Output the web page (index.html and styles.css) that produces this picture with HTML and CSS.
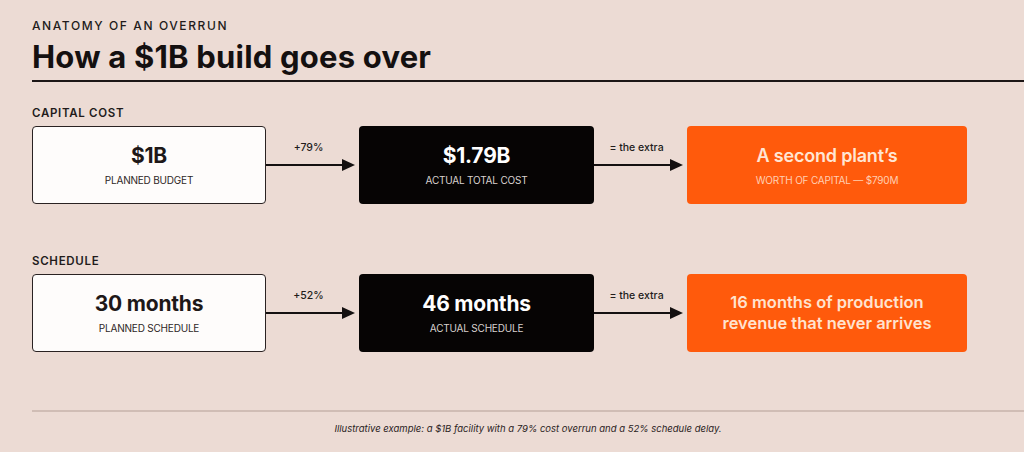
FILE: index.html
```html
<!DOCTYPE html>
<html lang="en">
<head>
<meta charset="utf-8">
<title>Anatomy of an overrun</title>
<link rel="stylesheet" href="styles.css">
</head>
<body>
<main class="page">
  <header class="head">
    <div class="eyebrow">ANATOMY OF AN OVERRUN</div>
    <h1 class="title">How a $1B build goes over</h1>
  </header>

  <section class="section section-cost">
    <h2 class="section-label">CAPITAL COST</h2>
    <div class="flow">
      <div class="box box-plan">
        <div class="box-value">$1B</div>
        <div class="box-label">PLANNED BUDGET</div>
      </div>
      <div class="connector">
        <span class="conn-label">+79%</span>
        <svg class="arrow" viewBox="0 0 89 12" width="89" height="12" aria-hidden="true"><line x1="0" y1="6" x2="78" y2="6" stroke="#141010" stroke-width="2"/><polygon points="76,0 89,6 76,12" fill="#141010"/></svg>
      </div>
      <div class="box box-actual">
        <div class="box-value">$1.79B</div>
        <div class="box-label">ACTUAL TOTAL COST</div>
      </div>
      <div class="connector">
        <span class="conn-label">= the extra</span>
        <svg class="arrow" viewBox="0 0 89 12" width="89" height="12" aria-hidden="true"><line x1="0" y1="6" x2="78" y2="6" stroke="#141010" stroke-width="2"/><polygon points="76,0 89,6 76,12" fill="#141010"/></svg>
      </div>
      <div class="box box-extra">
        <div class="box-value box-value-sm">A second plant’s</div>
        <div class="box-label">WORTH OF CAPITAL — $790M</div>
      </div>
    </div>
  </section>

  <section class="section section-schedule">
    <h2 class="section-label">SCHEDULE</h2>
    <div class="flow">
      <div class="box box-plan">
        <div class="box-value">30 months</div>
        <div class="box-label">PLANNED SCHEDULE</div>
      </div>
      <div class="connector">
        <span class="conn-label">+52%</span>
        <svg class="arrow" viewBox="0 0 89 12" width="89" height="12" aria-hidden="true"><line x1="0" y1="6" x2="78" y2="6" stroke="#141010" stroke-width="2"/><polygon points="76,0 89,6 76,12" fill="#141010"/></svg>
      </div>
      <div class="box box-actual">
        <div class="box-value">46 months</div>
        <div class="box-label">ACTUAL SCHEDULE</div>
      </div>
      <div class="connector">
        <span class="conn-label">= the extra</span>
        <svg class="arrow" viewBox="0 0 89 12" width="89" height="12" aria-hidden="true"><line x1="0" y1="6" x2="78" y2="6" stroke="#141010" stroke-width="2"/><polygon points="76,0 89,6 76,12" fill="#141010"/></svg>
      </div>
      <div class="box box-extra">
        <div class="box-text">16 months of production<br>revenue that never arrives</div>
      </div>
    </div>
  </section>

  <footer class="foot">
    <p class="caption">Illustrative example: a $1B facility with a 79% cost overrun and a 52% schedule delay.</p>
  </footer>
</main>
</body>
</html>
```

FILE: styles.css
```css
* { box-sizing: border-box; }

html, body {
  margin: 0;
  padding: 0;
  background: #ecdbd4;
}

body {
  font-family: Inter, "Liberation Sans", sans-serif;
  color: #181313;
  overflow: hidden;
}

.page {
  padding: 19px 0 0 32px;
  width: 1024px;
}

.eyebrow {
  font-size: 12px;
  line-height: 14px;
  font-weight: 500;
  letter-spacing: 1.6px;
  color: #221b1b;
}

.title {
  margin: 6px 0 0;
  font-size: 31px;
  line-height: 36px;
  font-weight: 700;
  letter-spacing: 0.2px;
  color: #141010;
  padding-bottom: 5px;
  border-bottom: 2px solid #1c1616;
}

.section-cost { margin-top: 24px; }
.section-schedule { margin-top: 50px; }

.section-label {
  margin: 0 0 6px;
  font-size: 11.5px;
  line-height: 14px;
  font-weight: 600;
  letter-spacing: 0.7px;
  color: #221b1b;
}

.flow {
  display: grid;
  grid-template-columns: 234px 93px 235px 93px 280px;
  height: 78px;
}

.box {
  border-radius: 4px;
  display: flex;
  flex-direction: column;
  align-items: center;
  justify-content: center;
  text-align: center;
}

.box-plan {
  background: #fefcfb;
  border: 1.5px solid #2a2222;
  color: #1e1818;
}

.box-actual {
  background: #060404;
  color: #ffffff;
}

.box-extra {
  background: #ff5a0c;
  color: #ffe3cf;
}

.box-value {
  font-size: 21px;
  line-height: 26px;
  font-weight: 700;
  letter-spacing: -0.2px;
}

.box-value-sm {
  font-size: 18px;
  font-weight: 600;
  color: #ffe6d4;
}

.box-label {
  margin-top: 5px;
  font-size: 10px;
  line-height: 13px;
  font-weight: 400;
  letter-spacing: -0.2px;
}

.box-plan .box-label { color: #2e2626; }
.box-actual .box-label { color: #d9d2cf; }
.box-extra .box-label { color: #ffcfb3; }

.box-text {
  font-size: 16.5px;
  line-height: 21px;
  font-weight: 600;
  color: #ffe3cf;
}

.connector {
  display: grid;
  grid-template-rows: 1fr 12px 1fr;
  justify-items: center;
}

.conn-label {
  grid-row: 1;
  align-self: end;
  margin-bottom: 4px;
  padding-right: 8px;
  font-size: 10.5px;
  line-height: 14px;
  font-weight: 500;
  color: #221b1b;
}

.arrow {
  grid-row: 2;
  justify-self: start;
  display: block;
}

.foot {
  margin-top: 58px;
  border-top: 2px solid #d0bdb5;
}

.caption {
  margin: 11px 0 0;
  text-align: center;
  font-size: 9.5px;
  line-height: 12px;
  font-style: italic;
  color: #2a2222;
}
```
